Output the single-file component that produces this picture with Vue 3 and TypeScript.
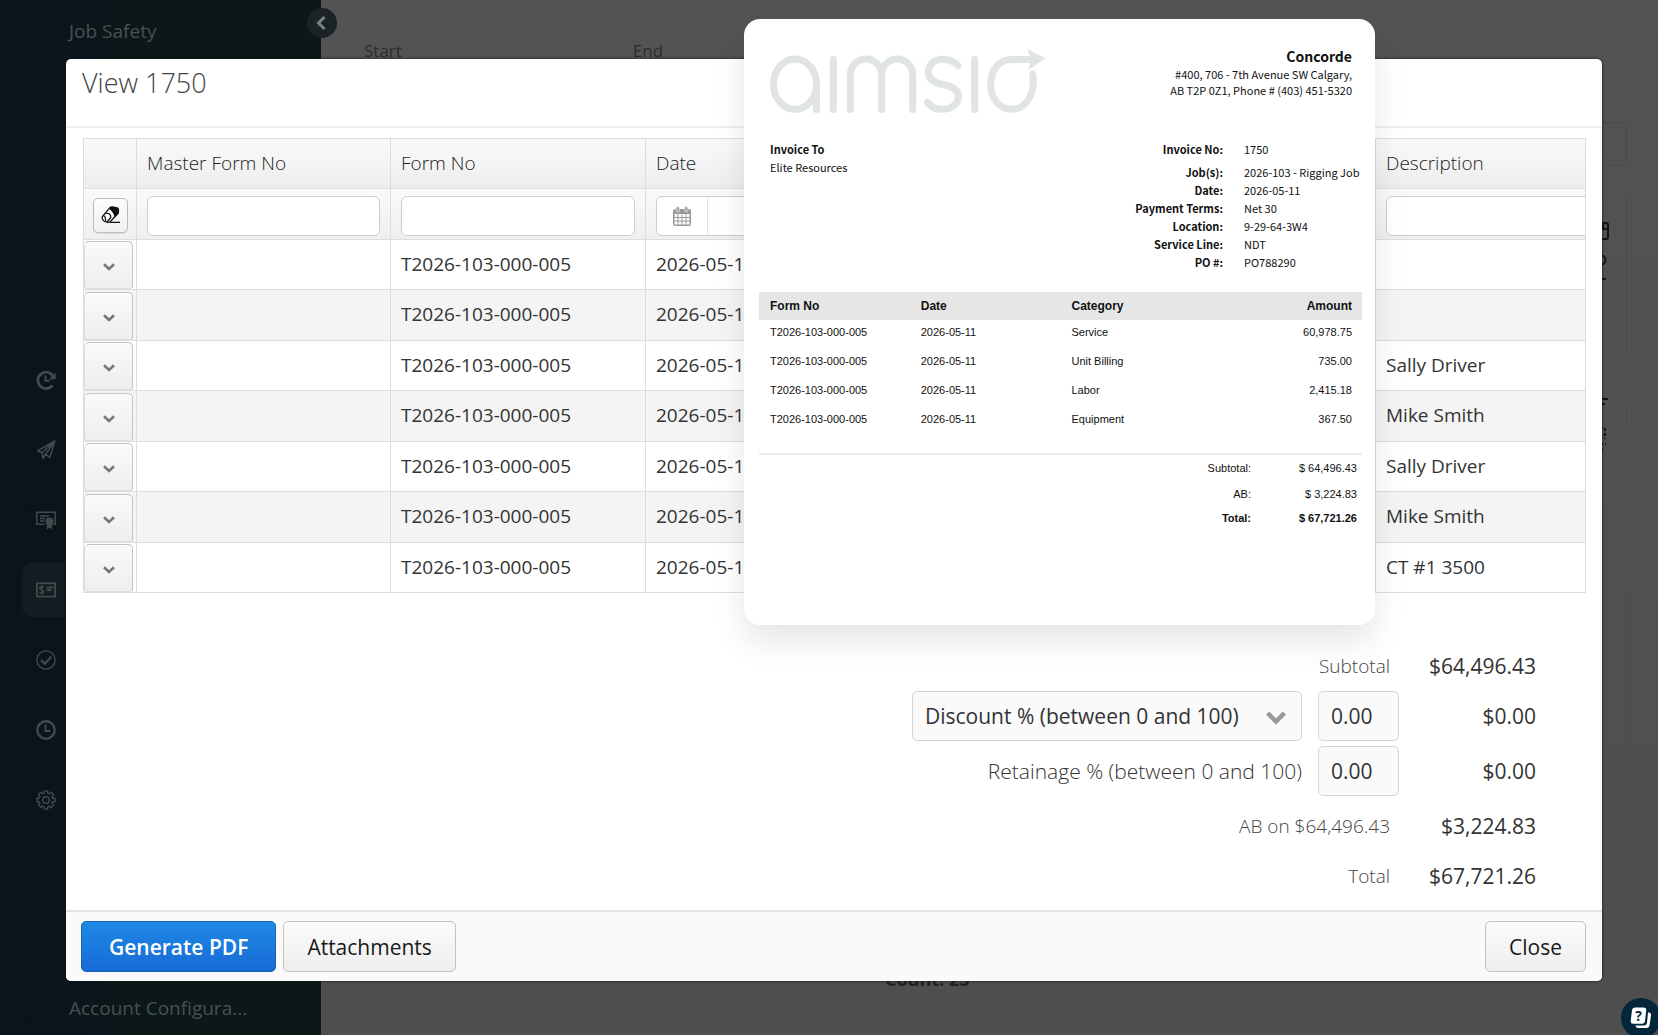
<script setup lang="ts">
import { ref } from 'vue'

interface FormRow {
  formNo: string
  date: string
  description: string
}

interface InvoiceLine {
  formNo: string
  date: string
  category: string
  amount: string
}

const descriptions: string[] = ['', '', 'Sally Driver', 'Mike Smith', 'Sally Driver', 'Mike Smith', 'CT #1 3500']
const rows: FormRow[] = descriptions.map((description) => ({
  formNo: 'T2026-103-000-005',
  date: '2026-05-11',
  description,
}))

const lines: InvoiceLine[] = [
  { formNo: 'T2026-103-000-005', date: '2026-05-11', category: 'Service', amount: '60,978.75' },
  { formNo: 'T2026-103-000-005', date: '2026-05-11', category: 'Unit Billing', amount: '735.00' },
  { formNo: 'T2026-103-000-005', date: '2026-05-11', category: 'Labor', amount: '2,415.18' },
  { formNo: 'T2026-103-000-005', date: '2026-05-11', category: 'Equipment', amount: '367.50' },
]

const details: [string, string][] = [
  ['Job(s):', '2026-103 - Rigging Job'],
  ['Date:', '2026-05-11'],
  ['Payment Terms:', 'Net 30'],
  ['Location:', '9-29-64-3W4'],
  ['Service Line:', 'NDT'],
  ['PO #:', 'PO788290'],
]

const filters = ref({ master: '', form: '', date: '', description: '' })
const discountType = ref('percent')
const discount = ref('0.00')
const retainage = ref('0.00')
</script>

<template>
  <div class="page">
    <aside class="sidebar">
      <a href="#" class="side-link">Job Safety</a>
      <nav class="rail" aria-label="Modules">
        <a href="#" class="rail-item" aria-label="History">
          <svg width="20" height="20" viewBox="0 0 20 20" fill="none" stroke="currentColor">
            <path d="M16.5 15.5A8.2 8.2 0 1 1 17.6 7" stroke-width="2.8" />
            <path d="M19.6 2.6V9.200H13z" fill="currentColor" stroke="none" />
            <path d="M9.500 5.500V10.800H13.500" stroke-width="2" />
          </svg>
        </a>
        <a href="#" class="rail-item" aria-label="Dispatch">
          <svg width="20" height="20" viewBox="0 0 20 20" fill="none" stroke="currentColor" stroke-width="1.500" stroke-linejoin="round">
            <path d="M18.800 1L1.500 10.800 6 12.800 18.800 1 13.800 17.500 9.500 14.200M6 12.800L7 18.600 9.500 14.200 18.800 1" />
          </svg>
        </a>
        <a href="#" class="rail-item" aria-label="Certificates">
          <svg width="20" height="20" viewBox="0 0 20 20" fill="none" stroke="currentColor" stroke-width="1.500">
            <path d="M8.500 14.300H.8V2.300H19.200V14.300H17.500M4 6H13M4 8.500H9M4 11H8.500" />
            <circle cx="13.500" cy="11.500" r="4" fill="currentColor" stroke="none" />
            <path d="M10.800 14V19.800L13.500 17.500 16.200 19.800V14z" fill="currentColor" stroke="none" />
          </svg>
        </a>
        <a href="#" class="rail-item active" aria-label="Invoices">
          <svg width="20" height="20" viewBox="0 0 20 20" fill="none" stroke="currentColor" stroke-width="1.800">
            <path d="M.9 3.300H19.100V16.700H.9z" />
            <path d="M10.500 7.300H17M10.500 10H15.500" stroke-width="1.800" />
            <path d="M7.600 7.400C6.800 6.500 3.600 6.400 3.600 8.300 3.600 10.300 7.800 9.600 7.800 11.800 7.800 13.800 4.300 13.600 3.300 12.500M5.700 5.500V14.700" stroke-width="1.400" />
          </svg>
        </a>
        <a href="#" class="rail-item" aria-label="Approvals">
          <svg width="20" height="20" viewBox="0 0 20 20" fill="none" stroke="currentColor">
            <circle cx="10" cy="10" r="9.100" stroke-width="1.400" />
            <path d="M5 10L8.800 13.700 15.300 6.800" stroke-width="2.200" />
          </svg>
        </a>
        <a href="#" class="rail-item" aria-label="Time">
          <svg width="20" height="20" viewBox="0 0 20 20" fill="none" stroke="currentColor">
            <circle cx="10" cy="10" r="8.700" stroke-width="2.400" />
            <path d="M9.500 4.500V11H14.500" stroke-width="2" />
          </svg>
        </a>
        <a href="#" class="rail-item" aria-label="Settings">
          <svg width="20" height="20" viewBox="0 0 20 20" fill="none" stroke="currentColor" stroke-width="1.400" stroke-linejoin="round">
            <path d="M8.300 .9h3.400v2.200l1.700.7 1.600-1.600 2.600 2.600-1.600 1.600.7 1.800h2.300v3.500h-2.300l-.7 1.800 1.600 1.600-2.600 2.500-1.600-1.500-1.700.7v2.300H8.300v-2.300l-1.700-.7L5 17.600 2.400 15.100 4 13.500l-.7-1.800H1V8.200h2.300L4 6.400 2.400 4.800 5 2.200l1.600 1.600 1.700-.7z" />
            <circle cx="10" cy="10" r="3.300" />
          </svg>
        </a>
      </nav>
      <a href="#" class="side-link">Account Configura...</a>
      <button class="collapse" type="button" aria-label="Collapse menu">
        <svg width="12" height="16" viewBox="0 0 12 16" fill="none" stroke="currentColor" stroke-width="3">
          <path d="M9.500 2L3.500 8 9.500 14" />
        </svg>
      </button>
    </aside>

    <main class="main">
      <div class="range"><span>Start</span><span>End</span></div>
      <div class="tools">
        <div class="tool-box"></div>
        <div class="tool-panel">
          <svg width="20" height="240" viewBox="0 0 20 240" fill="none" stroke="#151515" stroke-width="2">
            <rect x="1" y="10" width="16" height="16" rx="2" />
            <path d="M10 16H17M12 10V16" />
            <circle cx="10" cy="47" r="4.500" />
            <path d="M2 66H15M2 186H17M8 191H14" />
            <path d="M4 215H14V226M4 231H15M4 237H14" stroke-dasharray="3 2" />
          </svg>
        </div>
      </div>
      <div class="count">Count: 25</div>
    </main>

    <div class="overlay">
      <section class="modal" role="dialog" aria-labelledby="modal-title">
        <header class="modal-head">
          <h1 id="modal-title">View 1750</h1>
        </header>
        <div class="modal-body">
          <table class="grid">
            <colgroup>
              <col class="c-tool" />
              <col class="c-master" />
              <col class="c-form" />
              <col />
              <col class="c-desc" />
            </colgroup>
            <thead>
              <tr class="titles">
                <th></th>
                <th>Master Form No</th>
                <th>Form No</th>
                <th>Date</th>
                <th>Description</th>
              </tr>
              <tr class="filters">
                <td class="tool-cell">
                  <button class="eraser" type="button" aria-label="Clear filters">
                    <svg width="20" height="18" viewBox="0 0 20 18" fill="none" stroke="#111" stroke-width="1.200" stroke-linejoin="round">
                      <path d="M1.500 10.500L8.500 2.200Q9.500 1 11 1L15 1.500Q17.500 2 17.500 4.500L17.200 7 9.500 15.500Q8.500 16.500 7 16.300L3.500 15.500Q.2 13 1.500 10.500z" />
                      <path d="M8.500 2.200Q9.500 1 11 1L15 1.500Q17.500 2 17.500 4.500L17.200 7 14 10.500Q13.500 6.500 8.500 2.200z" fill="#111" />
                      <path d="M4.500 7.200L8 7.500Q10 9 9.800 11.500L6 16M2.500 9.500Q5 11 4.500 15.500M9 16.400H19" />
                    </svg>
                  </button>
                </td>
                <td><input v-model="filters.master" class="filter" type="text" aria-label="Filter by master form no" /></td>
                <td><input v-model="filters.form" class="filter" type="text" aria-label="Filter by form no" /></td>
                <td>
                  <div class="date-filter">
                    <button type="button" aria-label="Pick date">
                      <svg width="18" height="20" viewBox="0 0 18 20">
                        <path d="M2 3H16Q18 3 18 5V18Q18 20 16 20H2Q0 20 0 18V5Q0 3 2 3z" fill="#999" />
                        <path d="M1.500 8h3v3h-3zM5.500 8h3v3h-3zM9.500 8h3v3h-3zM13.500 8h3v3h-3zM1.500 12h3v2.500h-3zM5.500 12h3v2.500h-3zM9.500 12h3v2.500h-3zM13.500 12h3v2.500h-3zM1.500 15.500h3v3h-3zM5.500 15.500h3v3h-3zM9.500 15.500h3v3h-3zM13.500 15.500h3v3h-3z" fill="#fff" />
                        <rect x="3" y=".5" width="3.500" height="5.500" rx="1.700" fill="#aaa" stroke="#eee" stroke-width=".6" />
                        <rect x="11.500" y=".5" width="3.500" height="5.500" rx="1.700" fill="#aaa" stroke="#eee" stroke-width=".6" />
                      </svg>
                    </button>
                    <input v-model="filters.date" type="text" aria-label="Filter by date" />
                  </div>
                </td>
                <td><input v-model="filters.description" class="filter wide" type="text" aria-label="Filter by description" /></td>
              </tr>
            </thead>
            <tbody>
              <tr v-for="(row, i) in rows" :key="i">
                <td class="expand-cell">
                  <button class="expand" type="button" aria-label="Expand row">
                    <svg width="12" height="8" viewBox="0 0 12 8" fill="none" stroke="#777" stroke-width="2.600">
                      <path d="M1 1.200L6 6 11 1.200" />
                    </svg>
                  </button>
                </td>
                <td></td>
                <td>{{ row.formNo }}</td>
                <td>{{ row.date }}</td>
                <td>{{ row.description }}</td>
              </tr>
            </tbody>
          </table>

          <div class="totals">
            <div class="total-row">
              <span class="small-label">Subtotal</span>
              <span class="value">$64,496.43</span>
            </div>
            <div class="total-row">
              <div class="select-wrap">
                <select v-model="discountType" aria-label="Discount type">
                  <option value="percent">Discount % (between 0 and 100)</option>
                </select>
                <svg width="20" height="14" viewBox="0 0 20 14" fill="none" stroke="#999" stroke-width="4.500">
                  <path d="M1.600 2L10 10.500 18.400 2" />
                </svg>
              </div>
              <input v-model="discount" class="amount-input" type="text" aria-label="Discount" />
              <span class="value">$0.00</span>
            </div>
            <div class="total-row spaced">
              <label for="retainage">Retainage % (between 0 and 100)</label>
              <input id="retainage" v-model="retainage" class="amount-input" type="text" />
              <span class="value">$0.00</span>
            </div>
            <div class="total-row">
              <span class="small-label">AB on $64,496.43</span>
              <span class="value">$3,224.83</span>
            </div>
            <div class="total-row">
              <span class="small-label">Total</span>
              <span class="value">$67,721.26</span>
            </div>
          </div>
        </div>
        <footer class="modal-foot">
          <button class="btn primary" type="button">Generate PDF</button>
          <button class="btn" type="button">Attachments</button>
          <button class="btn close" type="button">Close</button>
        </footer>
      </section>
    </div>

    <article class="invoice">
      <header class="inv-head">
        <svg class="logo" width="276" height="65" viewBox="0 -2 276 65" fill="none" stroke="#e0e4e4" stroke-width="7" stroke-linecap="round" role="img" aria-label="aimsio">
          <ellipse cx="25" cy="34.200" rx="21.500" ry="25.200" />
          <path d="M46.500 34V59.400M63.300 9.300V59.400" />
          <path d="M80.300 59.400V25A15.700 16 0 0 1 111.700 25V59.400M111.700 25A15.500 16 0 0 1 142.700 25V59.400" />
          <path d="M188 15.500C182 9.500 177 9.200 173 9.200 163 9.200 158.300 16 158.300 22.500 158.300 30 165 33 173 34.500 183 36.500 188.500 40 188.500 46.500 188.500 54 181 59.300 172 59.300 165 59.300 161 57 157.500 52.500" />
          <path d="M204.700 9.300V59.400" />
          <path d="M262.700 24C266 46 254 59.300 242 59.300 229 59.300 220.700 48 220.700 34 220.700 20 229 9.500 242 9.500H259" />
          <path d="M257.300 -1L275.500 8.300 258.300 20 261 9z" fill="#e0e4e4" stroke="none" />
        </svg>
        <address>
          <strong>Concorde</strong>
          <span>#400, 706 - 7th Avenue SW Calgary,</span>
          <span>AB T2P 0Z1, Phone # (403) 451-5320</span>
        </address>
      </header>
      <div class="inv-meta">
        <div class="bill-to">
          <strong>Invoice To</strong>
          <span>Elite Resources</span>
        </div>
        <dl>
          <dt class="number">Invoice No:</dt>
          <dd class="number">1750</dd>
          <template v-for="[label, value] in details" :key="label">
            <dt>{{ label }}</dt>
            <dd>{{ value }}</dd>
          </template>
        </dl>
      </div>
      <table class="inv-lines">
        <thead>
          <tr>
            <th>Form No</th>
            <th>Date</th>
            <th>Category</th>
            <th>Amount</th>
          </tr>
        </thead>
        <tbody>
          <tr v-for="line in lines" :key="line.category">
            <td>{{ line.formNo }}</td>
            <td>{{ line.date }}</td>
            <td>{{ line.category }}</td>
            <td>{{ line.amount }}</td>
          </tr>
        </tbody>
      </table>
      <dl class="inv-totals">
        <dt>Subtotal:</dt>
        <dd>$ 64,496.43</dd>
        <dt>AB:</dt>
        <dd>$ 3,224.83</dd>
        <dt class="grand">Total:</dt>
        <dd class="grand">$ 67,721.26</dd>
      </dl>
    </article>

    <button class="help" type="button" aria-label="Help">
      <svg width="22" height="22" viewBox="0 0 22 22">
        <path d="M18 5.500H19Q21.500 6 21 8.500L19.500 18.500Q19 21 16.500 21H8Q5.500 20.500 5.500 18.500H14Q16.500 18.500 17 16z" fill="#fff" />
        <path d="M5 .5H13.500Q16.500 .5 16.200 3.500L15 14Q14.700 16.800 12 16.800H3Q.4 16.800 .7 14L2 3Q2.400 .5 5 .5z" fill="#fff" />
        <text x="8.500" y="14" text-anchor="middle" class="help-mark">?</text>
      </svg>
    </button>
  </div>
</template>

<style>
body {
  margin: 0;
  background: #505050;
}
</style>

<style scoped>
* {
  box-sizing: border-box;
}

button,
input,
select {
  font-family: inherit;
  margin: 0;
}

.page {
  position: relative;
  display: flex;
  min-height: 100vh;
  overflow: hidden;
  font-family: 'Open Sans', sans-serif;
  color: #333;
}

/* Dimmed application behind the dialog */
.sidebar {
  position: relative;
  z-index: 1;
  display: flex;
  flex-direction: column;
  justify-content: space-between;
  width: 321px;
  padding: 18px 0 14px;
  background: linear-gradient(90deg, #09141b, #0c171a 40%, #0c171a);
}

.side-link {
  padding-left: 69px;
  font-size: 19px;
  line-height: 26px;
  color: #465154;
  text-decoration: none;
}

.rail {
  display: flex;
  flex-direction: column;
  gap: 16px;
  margin-top: 141px;
}

.rail-item {
  display: flex;
  align-items: center;
  height: 54px;
  margin-left: 22px;
  padding-left: 14px;
  border-radius: 10px 0 0 10px;
  color: #424a4d;
}

.rail-item.active {
  background: #141c22;
}

.collapse {
  position: absolute;
  top: 8px;
  right: -16px;
  display: flex;
  align-items: center;
  justify-content: center;
  width: 30px;
  height: 30px;
  padding: 0 2px 0 0;
  border: 0;
  border-radius: 50%;
  background: #1b2326;
  color: #7a7f81;
}

.main {
  position: relative;
  display: flex;
  flex: 1;
  flex-direction: column;
  padding: 38px 31px 44px 43px;
  background: linear-gradient(#535353, #4e4e4e);
}

.range {
  display: flex;
  gap: 231px;
  font-size: 17px;
  line-height: 26px;
  color: #2d2d2d;
}

.tools {
  display: flex;
  flex: 1;
  flex-direction: column;
  align-items: flex-end;
  gap: 30px;
  padding-top: 58px;
}

.tool-box {
  width: 60px;
  height: 44px;
  border: 1px solid #4a4a4a;
  border-radius: 6px;
}

.tool-panel {
  flex: 1;
  width: 60px;
  padding: 17px 0 0 24px;
  border-right: 1px solid #4a4a4a;
}

.count {
  padding-left: 521px;
  font-size: 18px;
  font-weight: 700;
  line-height: 24px;
  color: #222;
}

/* Dialog */
.overlay {
  position: absolute;
  z-index: 2;
  inset: 0;
  display: flex;
  padding: 59px 56px 54px 66px;
}

.modal {
  display: flex;
  flex: 1;
  flex-direction: column;
  border-radius: 5px;
  background: #fff;
  box-shadow: 0 0 3px #111;
  overflow: hidden;
}

.modal-head {
  height: 69px;
  padding: 4px 16px 0;
  border-bottom: 2px solid #eee;
}

h1 {
  margin: 0;
  font-size: 27px;
  font-weight: 300;
  line-height: 40px;
  color: #444;
}

.modal-body {
  display: flex;
  flex: 1;
  flex-direction: column;
  padding: 10px 16px 9px 17px;
}

.grid {
  width: 100%;
  table-layout: fixed;
  border-collapse: separate;
  border-spacing: 0;
  border-top: 1px solid #ddd;
  border-left: 1px solid #ddd;
  font-size: 19px;
  line-height: 26px;
}

.c-tool {
  width: 53px;
}

.c-master {
  width: 254px;
}

.c-form {
  width: 255px;
}

.c-desc {
  width: 210px;
}

.grid th,
.grid td {
  height: 50px;
  padding: 0 10px 2px;
  border-right: 1px solid #ddd;
  border-bottom: 1px solid #ddd;
  overflow: hidden;
  text-align: left;
  white-space: nowrap;
}

.grid tbody tr:nth-child(even) td {
  height: 51px;
  background: #f4f4f4;
}

.titles th {
  background: linear-gradient(#fafafa, #ededed);
  font-weight: 300;
  color: #222;
}

.grid .filters td {
  height: 51px;
  padding-top: 4px;
  padding-bottom: 0;
  background: linear-gradient(#fafafa, #efefef);
}

.filter {
  display: block;
  width: 100%;
  height: 40px;
  padding: 0 10px;
  border: 1px solid #ccc;
  border-radius: 6px;
  background: #fff;
  font-size: 19px;
}

.filter.wide {
  width: 233px;
}

.date-filter {
  display: flex;
  height: 40px;
  border: 1px solid #ccc;
  border-radius: 6px;
  background: #fff;
  overflow: hidden;
}

.date-filter button {
  display: flex;
  align-items: center;
  justify-content: center;
  width: 51px;
  padding: 0;
  border: 0;
  border-right: 1px solid #e4e4e4;
  background: transparent;
}

.date-filter input {
  flex: 1;
  border: 0;
  font-size: 19px;
}

.eraser {
  display: flex;
  align-items: center;
  justify-content: center;
  width: 35px;
  height: 35px;
  padding: 0;
  border: 1px solid #bbb;
  border-radius: 5px;
  background: linear-gradient(#fdfdfd, #f0f0f0);
  box-shadow: 0 1px 1px #ddd;
}

.grid .filters .tool-cell {
  padding: 2px 9px 0;
}

.grid tbody tr .expand-cell {
  padding: 1px 3px 0 0;
  background: #fff;
}

.expand {
  display: flex;
  align-items: center;
  justify-content: center;
  width: 49px;
  height: 48px;
  padding: 4px 0 0;
  border: 1px solid #c4c4c4;
  border-bottom-color: #ddd;
  border-left-color: #ddd;
  border-radius: 5px 5px 3px 3px;
  background: linear-gradient(#fafafa, #eee);
}

.totals {
  display: flex;
  flex-direction: column;
  margin-top: auto;
  padding-right: 50px;
  font-size: 21px;
  line-height: 28px;
}

.total-row {
  display: flex;
  align-items: center;
  justify-content: flex-end;
  height: 50px;
}

.total-row.spaced {
  margin: 5px 0;
}

.total-row label {
  font-weight: 300;
}

.small-label {
  padding-right: 9px;
  font-size: 19px;
  font-weight: 300;
  color: #444;
}

.value {
  width: 137px;
  text-align: right;
}

.select-wrap {
  position: relative;
  width: 390px;
}

.select-wrap svg {
  position: absolute;
  top: 20px;
  right: 16px;
  pointer-events: none;
}

.select-wrap select {
  width: 100%;
  height: 50px;
  padding: 0 12px;
  border: 1px solid #d4d4d4;
  border-radius: 5px;
  background: #fafafa;
  font-size: 21px;
  color: #333;
  appearance: none;
}

.amount-input {
  width: 81px;
  height: 50px;
  margin-left: 16px;
  padding: 0 12px;
  border: 1px solid #d4d4d4;
  border-radius: 5px;
  background: #fafafa;
  font-size: 21px;
  color: #333;
}

.modal-foot {
  display: flex;
  align-items: center;
  gap: 7px;
  height: 71px;
  padding: 0 16px 0 15px;
  border-top: 2px solid #e2e2e2;
  background: #fafafa;
}

.btn {
  height: 51px;
  padding: 0 23px;
  border: 1px solid #c2c2c2;
  border-radius: 5px;
  background: linear-gradient(#fbfbfb, #eee);
  font-size: 21px;
  color: #191919;
}

.btn.primary {
  padding: 0 27px;
  border-color: #1763b8;
  background: linear-gradient(#1e88e5, #176bd6);
  font-weight: 600;
  color: #fff;
}

.btn.close {
  margin-left: auto;
}

/* Invoice preview floating over the dialog */
.invoice {
  position: absolute;
  z-index: 3;
  top: 19px;
  right: 283px;
  width: 631px;
  padding: 27px 13px 96px 15px;
  border-radius: 16px;
  background: #fff;
  box-shadow: 0 16px 32px rgba(0, 0, 0, 0.1);
  font-family: 'Noto Sans CJK SC', sans-serif;
  font-size: 11px;
  line-height: 16px;
  color: #111;
}

.inv-head {
  display: flex;
  justify-content: space-between;
  padding: 0 10px 0 11px;
}

.logo {
  margin-top: 2px;
}

.inv-head address {
  display: flex;
  flex-direction: column;
  font-style: normal;
  text-align: right;
}

.inv-head strong {
  font-size: 14px;
  line-height: 20px;
}

.inv-meta {
  display: flex;
  justify-content: space-between;
  margin-top: 27px;
  padding: 0 10px 0 11px;
}

.bill-to {
  display: flex;
  flex-direction: column;
  line-height: 18px;
}

dl {
  display: grid;
  grid-template-columns: 1fr 108px;
  column-gap: 21px;
  margin: 0;
}

.inv-meta dl {
  line-height: 18px;
}

.inv-meta .number {
  padding-bottom: 5px;
}

dt {
  font-weight: 700;
  text-align: right;
}

dd {
  margin: 0;
  white-space: nowrap;
}

.inv-lines {
  width: 100%;
  margin-top: 21px;
  table-layout: fixed;
  border-collapse: collapse;
  border-bottom: 2px solid #ececec;
  font-family: 'Liberation Sans', sans-serif;
}

.inv-lines th {
  height: 28px;
  padding: 0 10px 0 11px;
  background: #e6e6e6;
  font-size: 12px;
  text-align: left;
}

.inv-lines td {
  height: 29px;
  padding: 0 10px 6px 11px;
}

.inv-lines tbody tr:last-child td {
  height: 47px;
  padding-bottom: 23px;
}

.inv-lines th:last-child,
.inv-lines td:last-child {
  text-align: right;
}

.inv-totals {
  grid-template-columns: 1fr 85px;
  padding-right: 5px;
  font-family: 'Liberation Sans', sans-serif;
  line-height: 26px;
}

.inv-totals dt {
  font-weight: 400;
}

.inv-totals dd {
  text-align: right;
}

.inv-totals .grand {
  font-weight: 700;
  line-height: 22px;
}

.help {
  position: absolute;
  z-index: 3;
  right: -3px;
  bottom: -3px;
  display: flex;
  align-items: center;
  justify-content: center;
  width: 40px;
  height: 40px;
  padding: 0;
  border: 0;
  border-radius: 50%;
  background: #04263a;
}

.help-mark {
  font-size: 14px;
  font-weight: 700;
  fill: #04263a;
}
</style>
